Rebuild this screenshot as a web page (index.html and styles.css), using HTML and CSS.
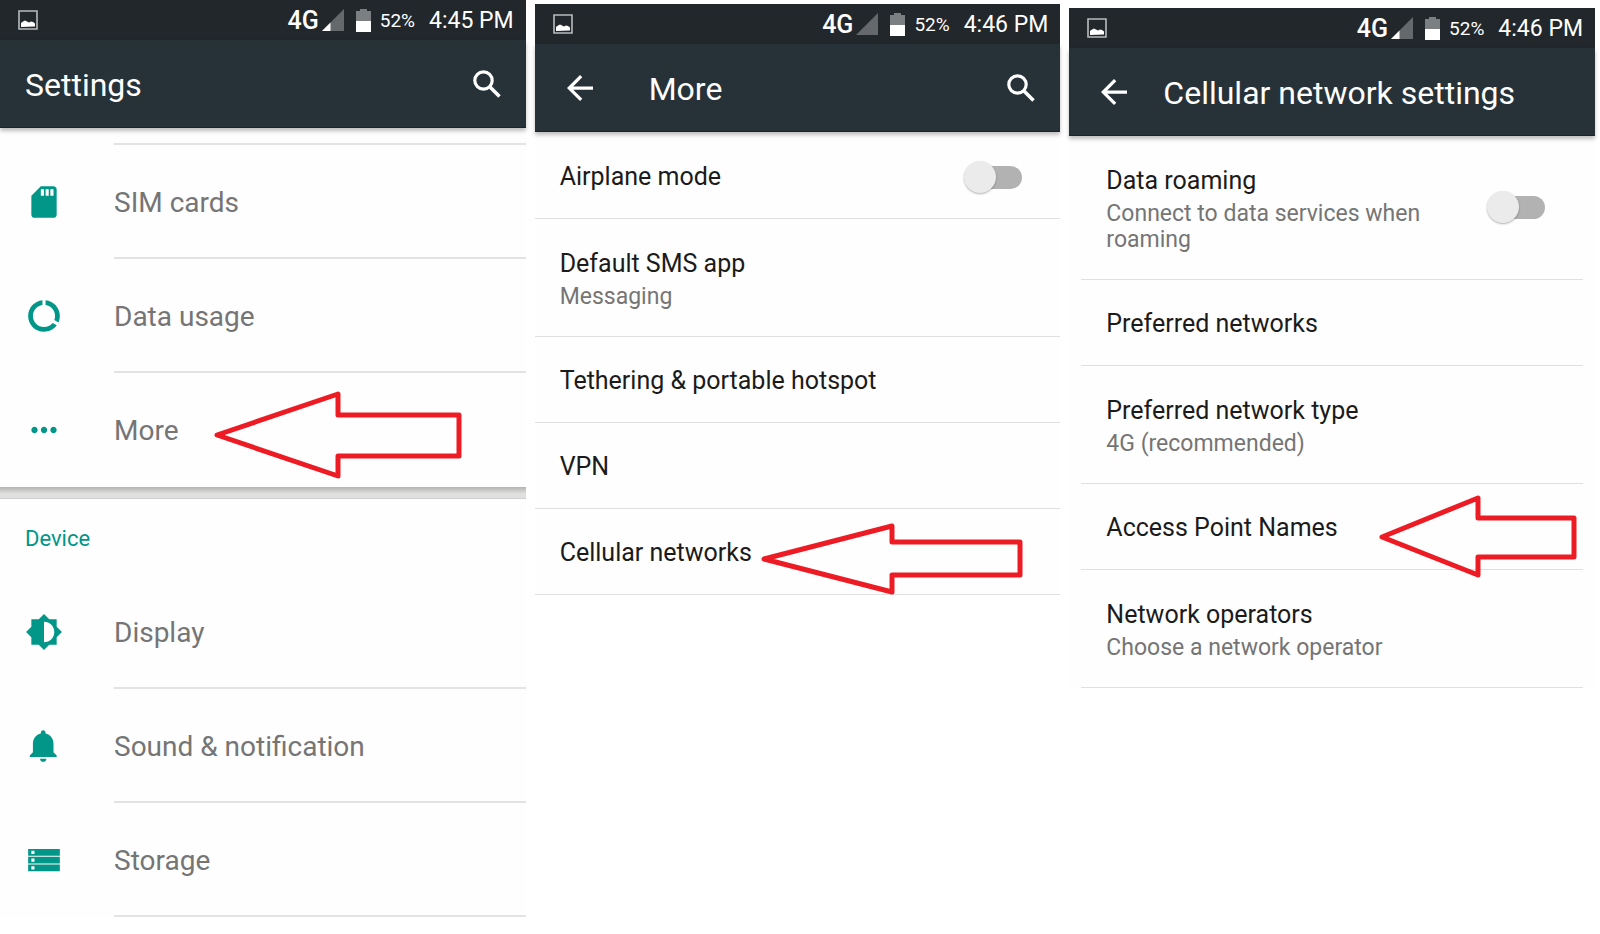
FILE: index.html
```html
<!DOCTYPE html>
<html lang="en">

<head>
  <meta charset="UTF-8" />
  <meta name="viewport" content="width=device-width, initial-scale=1" />
  <title>Settings</title>
  <link rel="stylesheet" href="styles.css">
</head>

<body>
  <!-- shared icons -->
  <svg class="sprite" aria-hidden="true">
    <symbol id="i-image" viewBox="0 0 20 20">
      <path fill="none" stroke="#b9bcbd" stroke-width="1.6" d="M1 1h18v18H1z" />
      <path fill="#fff" d="M3 17v-4l2-1.500 2-1 2 1 2 1 2-1 2 .500 2 1.500v3z" />
    </symbol>
    <symbol id="i-signal" viewBox="0 0 22 22">
      <path fill="#65696c" d="M0 22L22 0v22z" />
      <path fill="#fff" d="M0 22l8.500-8.500V22z" />
    </symbol>
    <symbol id="i-signal-empty" viewBox="0 0 22 22">
      <path fill="#65696c" d="M0 22L22 0v22z" />
    </symbol>
    <symbol id="i-battery" viewBox="0 0 15 23">
      <path fill="#7b7f82" d="M4 0h7v2h4v10H0V2h4z" />
      <path fill="#fff" d="M0 12h15v11H0z" />
    </symbol>
    <symbol id="i-search" viewBox="0 0 28 28">
      <circle cx="10.500" cy="10.500" r="8.700" fill="none" stroke="#fff" stroke-width="3.200" />
      <path fill="none" stroke="#fff" stroke-width="3.600" d="M16.500 16.500l10 10" />
    </symbol>
    <symbol id="i-back" viewBox="4 4 16 16">
      <path fill="#fff" d="M20 11H7.830l5.590-5.590L12 4l-8 8 8 8 1.410-1.410L7.830 13H20v-2z" />
    </symbol>
  </svg>

  <div class="screens">
    <section class="screen">
      <div class="status">
        <svg class="status-image"><use href="#i-image" /></svg>
        <span class="network">4G</span>
        <svg class="signal"><use href="#i-signal" /></svg>
        <svg class="battery"><use href="#i-battery" /></svg>
        <span class="percent">52%</span>
        <span class="clock">4:45 PM</span>
      </div>
      <header class="toolbar">
        <h1>Settings</h1>
        <button class="icon-btn search" aria-label="Search"><svg><use href="#i-search" /></svg></button>
      </header>

      <nav class="menu">
        <div class="menu-peek"></div>
        <a class="menu-item" href="#">
          <svg class="menu-icon" viewBox="0 0 24 24"><path d="M18 2h-8L4.020 8 4 20c0 1.100.9 2 2 2h12c1.100 0 2-.9 2-2V4c0-1.100-.9-2-2-2zm-6 6h-2V4h2v4zm3 0h-2V4h2v4zm3 0h-2V4h2v4z" /></svg>
          <span class="menu-text">SIM cards</span>
        </a>
        <a class="menu-item" href="#">
          <svg class="menu-icon" viewBox="0 0 24 24"><path d="M13 2.050v3.030c3.390.49 6 3.390 6 6.920 0 .9-.18 1.750-.48 2.540l2.600 1.530c.56-1.240.88-2.620.88-4.070 0-5.180-3.950-9.450-9-9.950zM12 19c-3.870 0-7-3.130-7-7 0-3.530 2.610-6.430 6-6.920V2.050c-5.060.5-9 4.760-9 9.950 0 5.520 4.470 10 9.990 10 3.310 0 6.240-1.610 8.060-4.090l-2.600-1.530C16.170 17.980 14.210 19 12 19z" /></svg>
          <span class="menu-text">Data usage</span>
        </a>
        <a class="menu-item" href="#">
          <svg class="menu-icon" viewBox="0 0 24 24"><path d="M6 10c-1.100 0-2 .9-2 2s.9 2 2 2 2-.9 2-2-.9-2-2-2zm12 0c-1.100 0-2 .9-2 2s.9 2 2 2 2-.9 2-2-.9-2-2-2zm-6 0c-1.100 0-2 .9-2 2s.9 2 2 2 2-.9 2-2-.9-2-2-2z" /></svg>
          <span class="menu-text last">More</span>
          <svg class="pointer pointer-more" viewBox="0 0 250 90"><path d="M4 45L125 4v21h121v41H125v20z" /></svg>
        </a>
      </nav>
      <div class="divider-band"></div>
      <nav class="menu">
        <h2>Device</h2>
        <a class="menu-item" href="#">
          <svg class="menu-icon" viewBox="0 0 24 24"><path d="M20 15.310L23.310 12 20 8.690V4h-4.690L12 .69 8.690 4H4v4.690L.69 12 4 15.310V20h4.690L12 23.310 15.310 20H20v-4.690zM12 18.500v-13c3.800 0 6.500 2.900 6.500 6.500s-2.700 6.500-6.500 6.500z" /></svg>
          <span class="menu-text">Display</span>
        </a>
        <a class="menu-item" href="#">
          <svg class="menu-icon" viewBox="0 0 24 24"><path d="M11.500 22c1.100 0 2-.9 2-2h-4c0 1.100.9 2 2 2zm6.500-6v-5.500c0-3.070-2.130-5.640-5-6.320V3.500c0-.83-.67-1.500-1.500-1.500S10 2.670 10 3.500v.68c-2.870.68-5 3.250-5 6.320V16l-2 2v1h17v-1l-2-2z" /></svg>
          <span class="menu-text">Sound &amp; notification</span>
        </a>
        <a class="menu-item" href="#">
          <svg class="menu-icon" viewBox="0 0 24 24"><path d="M2 5v4.300h20V5zm4 3.200H4v-2h2zM2 9.900v4.300h20V9.900zm4 3.200H4v-2h2zM2 14.800v4.300h20v-4.300zM6 18H4v-2h2z" /></svg>
          <span class="menu-text">Storage</span>
        </a>
      </nav>
    </section>

    <section class="screen screen-more">
      <div class="status">
        <svg class="status-image"><use href="#i-image" /></svg>
        <span class="network">4G</span>
        <svg class="signal"><use href="#i-signal-empty" /></svg>
        <svg class="battery"><use href="#i-battery" /></svg>
        <span class="percent">52%</span>
        <span class="clock">4:46 PM</span>
      </div>
      <header class="toolbar">
        <button class="icon-btn back" aria-label="Back"><svg><use href="#i-back" /></svg></button>
        <h1>More</h1>
        <button class="icon-btn search" aria-label="Search"><svg><use href="#i-search" /></svg></button>
      </header>

      <div class="prefs">
        <div class="pref">
          <label class="pref-title" for="airplane">Airplane mode</label>
          <input class="switch" type="checkbox" id="airplane">
        </div>
        <a class="pref pref-two" href="#">
          <span class="pref-title">Default SMS app</span>
          <span class="pref-summary">Messaging</span>
        </a>
        <a class="pref" href="#"><span class="pref-title">Tethering &amp; portable hotspot</span></a>
        <a class="pref" href="#"><span class="pref-title">VPN</span></a>
        <a class="pref" href="#">
          <span class="pref-title">Cellular networks</span>
          <svg class="pointer pointer-cellular" viewBox="0 0 264 74"><path d="M4 37L132 4v16h128v33H132v17z" /></svg>
        </a>
      </div>
    </section>

    <section class="screen screen-cellular">
      <div class="status">
        <svg class="status-image"><use href="#i-image" /></svg>
        <span class="network">4G</span>
        <svg class="signal"><use href="#i-signal" /></svg>
        <svg class="battery"><use href="#i-battery" /></svg>
        <span class="percent">52%</span>
        <span class="clock">4:46 PM</span>
      </div>
      <header class="toolbar">
        <button class="icon-btn back" aria-label="Back"><svg><use href="#i-back" /></svg></button>
        <h1>Cellular network settings</h1>
      </header>

      <div class="prefs">
        <div class="pref pref-two pref-switch">
          <label class="pref-label" for="roaming">
            <span class="pref-title">Data roaming</span>
            <span class="pref-summary">Connect to data services when roaming</span>
          </label>
          <input class="switch" type="checkbox" id="roaming">
        </div>
        <a class="pref" href="#"><span class="pref-title">Preferred networks</span></a>
        <a class="pref pref-two" href="#">
          <span class="pref-title">Preferred network type</span>
          <span class="pref-summary">4G (recommended)</span>
        </a>
        <a class="pref" href="#">
          <span class="pref-title">Access Point Names</span>
          <svg class="pointer pointer-apn" viewBox="0 0 200 86"><path d="M4 43L100 4v20h96v39h-96v18z" /></svg>
        </a>
        <a class="pref pref-two" href="#">
          <span class="pref-title">Network operators</span>
          <span class="pref-summary">Choose a network operator</span>
        </a>
      </div>
    </section>
  </div>
</body>

</html>
```

FILE: styles.css
```css
* {
  box-sizing: border-box;
}

body {
  margin: 0;
  font-family: Roboto, "Liberation Sans", sans-serif;
  background: #fff;
  color: #1b1b1b;
}

a {
  color: inherit;
  text-decoration: none;
}

h1,
h2 {
  margin: 0;
  font-weight: 400;
}

.sprite {
  display: none;
}

.screens {
  display: flex;
  align-items: flex-start;
  gap: 9px;
  padding-right: 5px;
}

.screen {
  flex: 1 1 0;
  min-width: 0;
  background: #fefefe;
}

.screen-more {
  margin-top: 4px;
}

.screen-cellular {
  margin-top: 8px;
}

/* status bar */
.status {
  display: flex;
  align-items: center;
  height: 40px;
  padding: 0 12px 0 18px;
  background: #22272b;
  color: #fff;
  white-space: nowrap;
}

.status-image {
  width: 20px;
  height: 20px;
  margin-right: auto;
}

.network {
  font-size: 25px;
  font-weight: 500;
}

.signal {
  width: 22px;
  height: 22px;
  margin: 0 12px 0 3px;
}

.battery {
  width: 15px;
  height: 23px;
  margin-right: 9px;
}

.percent {
  margin-right: 14px;
  font-size: 19px;
}

.clock {
  font-size: 23px;
}

/* toolbar */
.toolbar {
  display: flex;
  align-items: center;
  height: 88px;
  padding: 0 25px;
  background: #273238;
  color: #fff;
  border-bottom: 1px solid #1a242b;
  box-shadow: 0 3px 4px rgba(0, 0, 0, 0.25);
}

.toolbar h1 {
  padding-top: 2px;
  font-size: 32px;
  line-height: 40px;
  white-space: nowrap;
}

.icon-btn {
  padding: 0;
  border: none;
  background: none;
  cursor: pointer;
}

.icon-btn svg {
  display: block;
  width: 28px;
  height: 28px;
}

.search {
  margin-left: auto;
}

.back {
  margin: 0 56px 0 7px;
}

.back svg {
  width: 26px;
  height: 26px;
}

.screen-cellular .back {
  margin-right: 36px;
}

/* main settings list */
.menu-peek {
  height: 17px;
  margin-left: 114px;
  border-bottom: 2px solid #e3e3e3;
}

.menu h2 {
  padding: 27px 25px 23px;
  font-size: 22px;
  line-height: 26px;
  color: #009688;
}

.menu-item {
  position: relative;
  display: flex;
  align-items: center;
  padding-left: 25px;
  color: #757575;
}

.menu-icon {
  width: 38px;
  height: 38px;
  margin-right: 51px;
  fill: #009688;
}

.menu-text {
  flex: 1;
  padding: 38px 0 34px;
  border-bottom: 2px solid #e3e3e3;
  font-size: 28px;
  line-height: 40px;
}

.menu-text.last {
  border-bottom-color: transparent;
}

.divider-band {
  height: 12px;
  background: linear-gradient(#b4b4b2, #d4d4d2 45%, #e0e0de 60%, #e0e0de);
  border-bottom: 1px solid #cfcfcf;
}

/* preference rows */
.screen-more .prefs {
  padding-top: 1px;
}

.screen-cellular .prefs {
  margin: 0 12px;
}

.pref {
  position: relative;
  display: flex;
  flex-wrap: wrap;
  align-items: center;
  padding: 24px 38px 21px 25px;
  border-bottom: 1px solid #e0e0e0;
}

.pref-two {
  display: block;
  padding-top: 25px;
  padding-bottom: 26px;
}

.pref-switch {
  display: flex;
  flex-wrap: nowrap;
}

.pref-label {
  flex: 1;
  padding-right: 60px;
}

.pref-title {
  display: block;
  font-size: 25px;
  line-height: 40px;
}

.pref-summary {
  display: block;
  font-size: 23px;
  line-height: 26px;
  color: #757575;
}

.switch {
  appearance: none;
  position: relative;
  width: 58px;
  height: 32px;
  margin: 0 0 0 auto;
  cursor: pointer;
}

.switch::before {
  content: "";
  position: absolute;
  top: 5px;
  left: 8px;
  right: 0;
  height: 23px;
  border-radius: 12px;
  background: #b2b2b2;
}

.switch::after {
  content: "";
  position: absolute;
  top: 0;
  left: 0;
  width: 32px;
  height: 32px;
  border-radius: 50%;
  background: #ebebeb;
  box-shadow: 0 1px 2px rgba(0, 0, 0, 0.3);
}

.switch:checked::before {
  background: #80cbc4;
}

.switch:checked::after {
  left: auto;
  right: 0;
  background: #009688;
}

/* red arrows over the rows */
.pointer {
  position: absolute;
  z-index: 1;
  fill: none;
  stroke: #ed1c24;
  stroke-width: 5;
  stroke-linejoin: round;
}

.pointer-more {
  top: 17px;
  left: 213px;
  width: 250px;
  height: 90px;
}

.pointer-cellular {
  top: 13px;
  left: 225px;
  width: 264px;
  height: 74px;
}

.pointer-apn {
  top: 10px;
  left: 297px;
  width: 200px;
  height: 86px;
}
```
